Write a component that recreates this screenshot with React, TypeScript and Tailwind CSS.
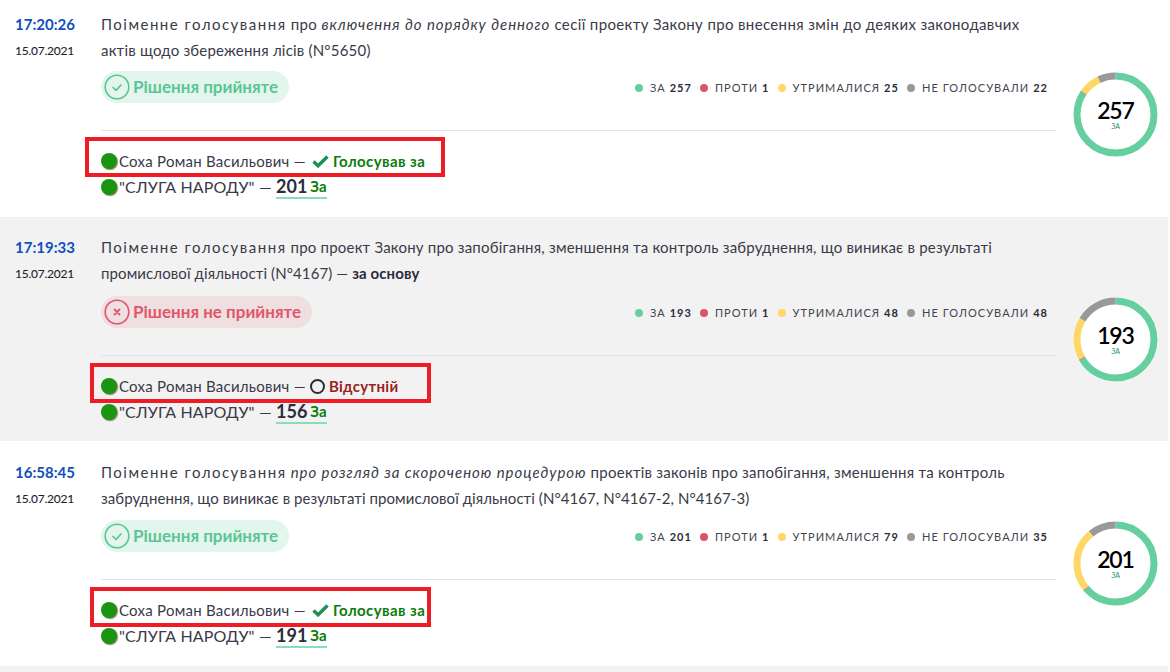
const font = { fontFamily: '"Lato", "Noto Sans", sans-serif' };

type Vote = {
  time: string;
  title: React.ReactNode;
  passed: boolean;
  counts: [number, number, number, number];
  status: "yes" | "absent";
  party: number;
  bg: string;
  box: string;
  height: string;
  timeTop: string;
  textTop: string;
  pillTop: string;
  donutTop: string;
};

const Lead = ({ children }: { children: React.ReactNode }) => <span className="tracking-[1.5px]">{children}</span>;

const votes: Vote[] = [
  {
    time: "17:20:26",
    title: (
      <>
        <span className="tracking-[0.36px]">
          <Lead>Поіменне голосування</Lead> про <i className="tracking-[0.93px]">включення до порядку денного</i> сесії проекту Закону про внесення змін до деяких законодавчих
        </span>
        <br />
        <span className="tracking-[0.2px]">актів щодо збереження лісів (N°5650)</span>
      </>
    ),
    passed: true,
    counts: [257, 1, 25, 22],
    status: "yes",
    party: 201,
    bg: "bg-white",
    box: "left-[85px] top-[137px] w-[360px]",
    height: "h-[217px]",
    timeTop: "pt-[14px]",
    textTop: "pt-[12px]",
    pillTop: "mt-[8px]",
    donutTop: "pt-[72px]",
  },
  {
    time: "17:19:33",
    title: (
      <>
        <span className="tracking-[0.2px]">
          <Lead>Поіменне голосування</Lead> про проект Закону про запобігання, зменшення та контроль забруднення, що виникає в результаті
        </span>
        <br />
        <span className="tracking-[0.1px]">
          промислової діяльності (N°4167) — <b className="font-bold text-[#2c2c3a]">за основу</b>
        </span>
      </>
    ),
    passed: false,
    counts: [193, 1, 48, 48],
    status: "absent",
    party: 156,
    bg: "bg-[#f2f2f2]",
    box: "left-[90px] top-[146px] w-[341px]",
    height: "h-[224px]",
    timeTop: "pt-[20px]",
    textTop: "pt-[18px]",
    pillTop: "mt-[10px]",
    donutTop: "pt-[80px]",
  },
  {
    time: "16:58:45",
    title: (
      <>
        <span className="tracking-[0.25px]">
          <Lead>Поіменне голосування</Lead> <i className="tracking-[0.95px]">про розгляд за скороченою процедурою</i> проектів законів про запобігання, зменшення та контроль
        </span>
        <br />
        <span className="tracking-[0.07px]">забруднення, що виникає в результаті промислової діяльності (N°4167, N°4167-2, N°4167-3)</span>
      </>
    ),
    passed: true,
    counts: [201, 1, 79, 35],
    status: "yes",
    party: 191,
    bg: "bg-white",
    box: "left-[90px] top-[146px] w-[341px]",
    height: "h-[225px]",
    timeTop: "pt-[21px]",
    textTop: "pt-[19px]",
    pillTop: "mt-[9px]",
    donutTop: "pt-[80px]",
  },
];

const colors = ["#66cf9f", "#dc5468", "#ffd766", "#999999"];
const labels = ["ЗА", "ПРОТИ", "УТРИМАЛИСЯ", "НЕ ГОЛОСУВАЛИ"];

function Donut({ counts }: { counts: number[] }) {
  const r = 38.5;
  const c = 2 * Math.PI * r;
  const total = counts.reduce((a, b) => a + b, 0);
  let offset = 0;
  return (
    <div className="relative h-[85px] w-[85px] shrink-0 rounded-full bg-white">
      <svg viewBox="0 0 85 85" className="h-[85px] w-[85px] -rotate-90">
        {counts.map((n, i) => {
          const len = (n / total) * c;
          const el = (
            <circle
              key={i}
              cx="42.5"
              cy="42.5"
              r={r}
              fill="none"
              stroke={colors[i]}
              strokeWidth="7"
              strokeDasharray={`${len} ${c - len}`}
              strokeDashoffset={-offset}
            />
          );
          offset += len;
          return el;
        })}
      </svg>
      <div className="absolute inset-0 flex flex-col items-center pt-[26px]">
        <span className="text-[23px] font-semibold leading-[24px] tracking-[-1.1px] text-black">{counts[0]}</span>
        <span className="text-[7px] leading-[8px] text-[#1f8f5f]">ЗА</span>
      </div>
    </div>
  );
}

function Pill({ passed }: { passed: boolean }) {
  const color = passed ? "text-[#5cc596]" : "text-[#e0566a]";
  return (
    <div
      className={`flex h-[32px] items-center gap-[3px] rounded-full pl-[3px] text-[17px] font-bold ${color} ${
        passed ? "w-[188px] bg-[#e3f6ed]" : "w-[211px] bg-[#f0dfe1]"
      }`}
    >
      <svg viewBox="0 0 26 26" className="h-[26px] w-[26px]" fill="none" stroke="currentColor" strokeLinecap="round" strokeLinejoin="round">
        <circle cx="13" cy="13" r="11.8" strokeWidth="1.6" />
        {passed ? (
          <path d="M9 13.5l3 2.8 5-5.3" strokeWidth="1.7" />
        ) : (
          <path d="M10.5 10.5l5 5M15.5 10.5l-5 5" strokeWidth="1.9" />
        )}
      </svg>
      <span>{passed ? "Рішення прийняте" : "Рішення не прийняте"}</span>
    </div>
  );
}

function Dot() {
  return <span className="inline-block h-[16px] w-[16px] shrink-0 rounded-full bg-[#1a9510] shadow-[1px_1px_1px_rgba(90,70,30,0.7)]" />;
}

function VoteRow({ v }: { v: Vote }) {
  return (
    <section className={`relative flex ${v.bg} ${v.height}`}>
      <div className={`w-[101px] shrink-0 pl-[15px] ${v.timeTop}`}>
        <div className="text-[15px] font-bold leading-[20px] text-[#0f4fc0]">{v.time}</div>
        <div className="mt-[8px] text-[12px] font-medium leading-[18px] tracking-[-0.25px] text-[#1f1f2a]">15.07.2021</div>
      </div>
      <div className={`w-[955px] shrink-0 ${v.textTop}`}>
        <p className="text-[15px] leading-[25.5px] text-[#3a3a48]">{v.title}</p>
        <div className={`flex h-[32px] items-center justify-between ${v.pillTop}`}>
          <Pill passed={v.passed} />
          <div className="flex items-center gap-[8px] pr-[8px] pt-[2px] text-[11px] tracking-[1.05px] text-[#44444f]">
            {v.counts.map((n, i) => (
              <span key={i} className="flex items-center">
                <span className="mr-[7px] h-[8px] w-[8px] rounded-full" style={{ backgroundColor: colors[i] }} />
                {labels[i]}&nbsp;<b className="font-bold text-[#2c2c3a]">{n}</b>
              </span>
            ))}
          </div>
        </div>
        <div className="mt-[27px] border-t border-[#e2e2e2] pt-[17px]">
          <div className="flex h-[26px] items-center text-[15px] tracking-[0.25px] text-[#3a3a48]">
            <Dot />
            <span className="ml-[2px]">Соха Роман Васильович —&nbsp;</span>
            {v.status === "yes" ? (
              <span className="ml-[2px] flex items-center text-[15px] font-bold tracking-[0.4px] text-[#0a7d0a]">
                <svg viewBox="0 0 17 13" className="mr-[4px] h-[13px] w-[17px]" fill="none" stroke="#1f8f5a" strokeWidth="3.4">
                  <path d="M1.5 6.5l4.6 4.3L15.5 1.5" />
                </svg>
                Голосував за
              </span>
            ) : (
              <span className="flex items-center text-[15px] font-bold tracking-[0.3px] text-[#9a2222]">
                <span className="mr-[4px] h-[15px] w-[15px] rounded-full border-2 border-[#2c2c3a]" />
                Відсутній
              </span>
            )}
          </div>
          <div className="flex h-[26px] items-center text-[16px] text-[#3a3a48]">
            <Dot />
            <span className="ml-[2px] tracking-[0.15px]">"СЛУГА НАРОДУ" —&nbsp;</span>
            <span className="flex h-[24px] items-center gap-[3px] border-b-2 border-[#8bdcb8]">
              <b className="text-[18px] font-bold text-[#2c2c3a]">{v.party}</b>
              <b className="text-[15px] font-bold text-[#0a7d0a]">За</b>
            </span>
          </div>
        </div>
      </div>
      <div className={`pl-[17px] ${v.donutTop}`}>
        <Donut counts={v.counts} />
      </div>
      <div className={`absolute h-[40px] border-[4px] border-[#ee1c25] ${v.box}`} />
    </section>
  );
}

export default function App() {
  return (
    <main className="min-h-[672px] w-[1168px] bg-[#f2f2f2]" style={font}>
      {votes.map((v) => (
        <VoteRow key={v.time} v={v} />
      ))}
    </main>
  );
}
